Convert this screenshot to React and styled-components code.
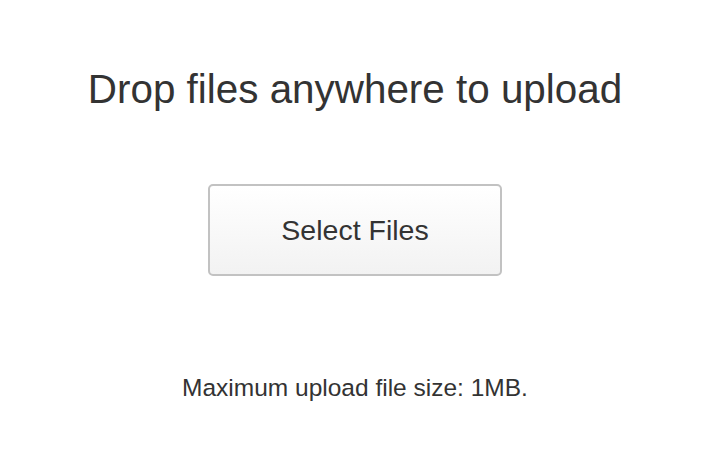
import React from 'react';
import styled, { createGlobalStyle } from 'styled-components';

const GlobalStyle = createGlobalStyle`
  body {
    margin: 0;
    background: #fff;
    font-family: "Liberation Sans", Arial, sans-serif;
    color: #333;
  }
`;

const Page = styled.div`
  display: flex;
  flex-direction: column;
  align-items: center;
  width: 710px;
  padding-top: 65px;
`;

const Title = styled.h1`
  margin: 0;
  font-size: 40.4px;
  font-weight: normal;
  line-height: 48px;
  color: #333;
  white-space: nowrap;
`;

const SelectButton = styled.button`
  margin-top: 71px;
  width: 294px;
  height: 92px;
  border: 2px solid #c2c2c2;
  border-radius: 5px;
  background: linear-gradient(#fff, #f2f2f2);
  font-family: inherit;
  font-size: 28.5px;
  color: #333;
  cursor: pointer;
`;

const Note = styled.p`
  margin: 97px 0 0;
  font-size: 24.5px;
  line-height: 30px;
  color: #333;
  white-space: nowrap;
`;

export default function App() {
  return (
    <>
      <GlobalStyle />
      <Page>
        <Title>Drop files anywhere to upload</Title>
        <SelectButton>Select Files</SelectButton>
        <Note>Maximum upload file size: 1MB.</Note>
      </Page>
    </>
  );
}
